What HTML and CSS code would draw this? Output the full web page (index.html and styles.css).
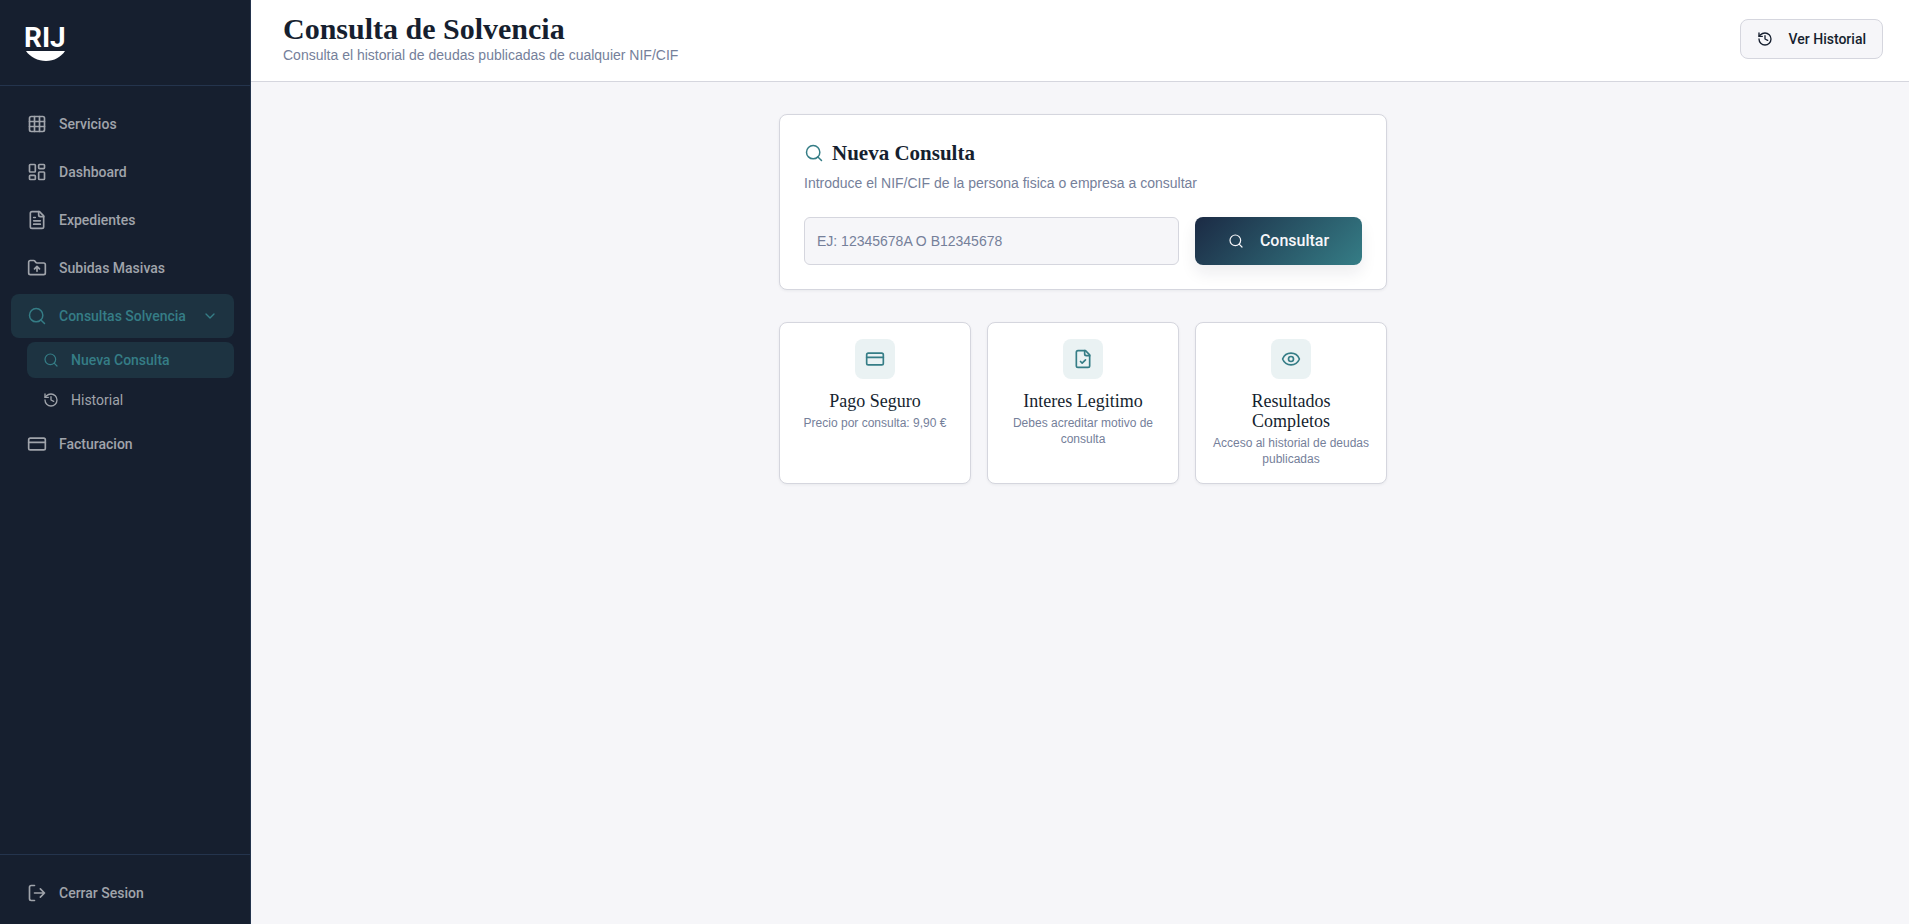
FILE: index.html
```html
<!doctype html>
<html lang="es">
<head>
  <meta charset="UTF-8">
  <meta name="viewport" content="width=device-width, initial-scale=1">
  <title>Consulta de Solvencia</title>
  <link rel="stylesheet" href="styles.css">
</head>
<body>

  <!-- iconos compartidos -->
  <svg class="sprite" aria-hidden="true">
    <symbol id="i-search" viewBox="0 0 24 24"><circle cx="11" cy="11" r="8"/><path d="m21 21-4.300-4.300"/></symbol>
    <symbol id="i-history" viewBox="0 0 24 24"><path d="M3 12a9 9 0 1 0 9-9 9.750 9.750 0 0 0-6.740 2.740L3 8"/><path d="M3 3v5h5"/><path d="M12 7v5l4 2"/></symbol>
    <symbol id="i-card" viewBox="0 0 24 24"><rect x="2" y="5" width="20" height="14" rx="2"/><path d="M2 10h20"/></symbol>
  </svg>

  <div class="app">
    <!-- menu lateral -->
    <aside class="sidebar">
      <div class="logo">
        <svg width="48" height="44" viewBox="0 0 48 44" role="img" aria-label="RIJ">
          <text class="logo_text" x="0 18 26" y="27">RIJ</text>
          <path d="M2 31h39c-4 6-11 10-19 10S6 37 2 31z"/>
        </svg>
      </div>

      <nav class="menu">
        <a class="item" href="#">
          <svg class="icon" viewBox="0 0 24 24"><rect x="3" y="3" width="18" height="18" rx="2"/><path d="M3 9h18M3 15h18M9 3v18M15 3v18"/></svg>
          Servicios
        </a>
        <a class="item" href="#">
          <svg class="icon" viewBox="0 0 24 24"><rect x="3" y="3" width="7" height="9" rx="1"/><rect x="14" y="3" width="7" height="5" rx="1"/><rect x="14" y="12" width="7" height="9" rx="1"/><rect x="3" y="16" width="7" height="5" rx="1"/></svg>
          Dashboard
        </a>
        <a class="item" href="#">
          <svg class="icon" viewBox="0 0 24 24"><path d="M15 2H6a2 2 0 0 0-2 2v16a2 2 0 0 0 2 2h12a2 2 0 0 0 2-2V7z"/><path d="M14 2v4a2 2 0 0 0 2 2h4M10 9H8M16 13H8M16 17H8"/></svg>
          Expedientes
        </a>
        <a class="item" href="#">
          <svg class="icon" viewBox="0 0 24 24"><path d="M20 20a2 2 0 0 0 2-2V8a2 2 0 0 0-2-2h-7.900a2 2 0 0 1-1.690-.9L9.600 3.900A2 2 0 0 0 7.930 3H4a2 2 0 0 0-2 2v13a2 2 0 0 0 2 2z"/><path d="M12 10v6M9 13l3-3 3 3"/></svg>
          Subidas Masivas
        </a>
        <a class="item active" href="#">
          <svg class="icon thin"><use href="#i-search"/></svg>
          Consultas Solvencia
          <svg class="icon small arrow" viewBox="0 0 24 24"><path d="m6 9 6 6 6-6"/></svg>
        </a>
        <div class="submenu">
          <a class="item sub active" href="#"><svg class="icon small thin"><use href="#i-search"/></svg>Nueva Consulta</a>
          <a class="item sub plain" href="#"><svg class="icon small"><use href="#i-history"/></svg>Historial</a>
        </div>
        <a class="item" href="#">
          <svg class="icon"><use href="#i-card"/></svg>
          Facturacion
        </a>
      </nav>

      <div class="logout">
        <button class="item" type="button">
          <svg class="icon" viewBox="0 0 24 24"><path d="M9 21H5a2 2 0 0 1-2-2V5a2 2 0 0 1 2-2h4M16 17l5-5-5-5M21 12H9"/></svg>
          Cerrar Sesion
        </button>
      </div>
    </aside>

    <div class="page">
      <header class="header">
        <div>
          <h1>Consulta de Solvencia</h1>
          <p class="text">Consulta el historial de deudas publicadas de cualquier NIF/CIF</p>
        </div>
        <button class="but_history" type="button">
          <svg class="icon small"><use href="#i-history"/></svg>
          Ver Historial
        </button>
      </header>

      <main class="main">
        <div class="content">
          <!-- formulario -->
          <section class="card query">
            <h2><svg class="icon thin teal"><use href="#i-search"/></svg><label for="nif">Nueva Consulta</label></h2>
            <p class="text">Introduce el NIF/CIF de la persona fisica o empresa a consultar</p>
            <form class="form">
              <input id="nif" class="nif" type="text" placeholder="EJ: 12345678A O B12345678">
              <button class="but_query" type="button">
                <svg class="icon small thin"><use href="#i-search"/></svg>
                Consultar
              </button>
            </form>
          </section>

          <!-- ventajas -->
          <section class="infos">
            <div class="card info">
              <div class="badge"><svg class="icon"><use href="#i-card"/></svg></div>
              <h3>Pago Seguro</h3>
              <p>Precio por consulta: 9,90 €</p>
            </div>
            <div class="card info">
              <div class="badge"><svg class="icon" viewBox="0 0 24 24"><path d="M15 2H6a2 2 0 0 0-2 2v16a2 2 0 0 0 2 2h12a2 2 0 0 0 2-2V7z"/><path d="M14 2v4a2 2 0 0 0 2 2h4M9 15l2 2 4-4"/></svg></div>
              <h3>Interes Legitimo</h3>
              <p>Debes acreditar motivo de consulta</p>
            </div>
            <div class="card info">
              <div class="badge"><svg class="icon" viewBox="0 0 24 24"><path d="M2.060 12.350a1 1 0 0 1 0-.7 10.750 10.750 0 0 1 19.880 0 1 1 0 0 1 0 .7 10.750 10.750 0 0 1-19.880 0z"/><circle cx="12" cy="12" r="3"/></svg></div>
              <h3>Resultados Completos</h3>
              <p>Acceso al historial de deudas publicadas</p>
            </div>
          </section>
        </div>
      </main>
    </div>
  </div>

</body>
</html>
```

FILE: styles.css
```css
* {
box-sizing: border-box;
margin: 0;
padding: 0;
}

body {
font-family: "Liberation Sans", Arial, sans-serif;
font-size: 14px;
line-height: 20px;
color: #161f2f;
background: #f6f6f9;
}

button,input {
font: inherit;
color: inherit;
}

.app {
display: flex;
min-height: 100vh;
}

/* iconos */
.sprite {
position: absolute;
width: 0;
height: 0;
}

.icon {
width: 20px;
height: 20px;
flex-shrink: 0;
fill: none;
stroke: currentColor;
stroke-width: 2;
stroke-linecap: round;
stroke-linejoin: round;
}

.small {
width: 16px;
height: 16px;
}

.thin {
stroke-width: 1.8;
}

.teal {
color: #357d86;
}

/* menu lateral */
.sidebar {
display: flex;
flex-direction: column;
flex-shrink: 0;
width: 251px;
background: #161f2f;
border-right: 1px solid #24344d;
}

.logo {
height: 86px;
padding: 20px 24px;
border-bottom: 1px solid #24344d;
}

.logo svg {
display: block;
fill: #fff;
}

.logo_text {
font-family: Roboto, sans-serif;
font-size: 28px;
font-weight: bold;
}

.menu {
display: flex;
flex-direction: column;
flex: 1;
gap: 4px;
padding: 16px 16px 16px 11px;
}

.item,.but_history,.but_query {
font-family: Roboto, "Liberation Sans", sans-serif;
font-weight: 500;
}

.item {
display: flex;
align-items: center;
gap: 12px;
width: 100%;
height: 44px;
padding: 0 16px;
border: 0;
border-radius: 8px;
background: none;
color: #a0a4ab;
text-decoration: none;
}

.active {
background: #1d3341;
color: #357d86;
}

.arrow {
margin-left: auto;
}

.submenu {
display: flex;
flex-direction: column;
gap: 4px;
padding-left: 16px;
}

.sub {
height: 36px;
}

.plain {
font-weight: normal;
}

.logout {
padding: 16px 16px 9px 11px;
border-top: 1px solid #24344d;
}

/* cabecera */
.page {
flex: 1;
min-width: 0;
}

.header {
display: flex;
align-items: center;
justify-content: space-between;
padding: 13px 26px 16px 32px;
background: #fff;
border-bottom: 1px solid #d5d6de;
}

h1,h2,h3 {
font-family: "Liberation Serif", "Times New Roman", serif;
}

h1 {
font-size: 30px;
line-height: 32px;
}

.text {
color: #75809a;
}

.but_history {
display: flex;
align-items: center;
gap: 16px;
height: 40px;
padding: 0 16px;
border: 1px solid #d5d6de;
border-radius: 8px;
background: #f6f6f9;
}

/* contenido */
.main {
padding: 32px 26px 32px 32px;
}

.content {
max-width: 608px;
margin: 0 auto;
}

.card {
background: #fff;
border: 1px solid #d5d6de;
border-radius: 8px;
box-shadow: 0 1px 3px rgba(22,31,47,0.06);
}

.query {
padding: 24px;
}

h2 {
display: flex;
align-items: center;
gap: 8px;
margin-bottom: 6px;
font-size: 21px;
line-height: 28px;
}

.form {
display: grid;
grid-template-columns: 1fr 167px;
gap: 16px;
margin-top: 24px;
}

.nif {
width: 100%;
height: 48px;
padding: 0 12px;
border: 1px solid #d5d6de;
border-radius: 6px;
background: #f6f6f9;
}

.nif::placeholder {
color: #75809a;
opacity: 1;
}

.but_query {
display: flex;
align-items: center;
justify-content: center;
gap: 16px;
height: 48px;
border: 0;
border-radius: 8px;
background: linear-gradient(135deg,#1b2a44 0%, #357d86 100%);
box-shadow: 0 8px 16px rgba(22,31,47,0.08);
color: #f6f6f9;
font-size: 16px;
}

/* tarjetas de abajo */
.infos {
display: grid;
grid-template-columns: repeat(3, 1fr);
gap: 16px;
margin-top: 32px;
}

.info {
padding: 16px;
text-align: center;
}

.badge {
display: flex;
align-items: center;
justify-content: center;
width: 40px;
height: 40px;
margin: 0 auto 12px;
border-radius: 8px;
background: #eaf2f3;
color: #357d86;
}

h3 {
margin-bottom: 4px;
font-size: 18px;
font-weight: normal;
line-height: 20px;
}

.info p {
font-size: 12px;
line-height: 16px;
color: #75809a;
}
```
